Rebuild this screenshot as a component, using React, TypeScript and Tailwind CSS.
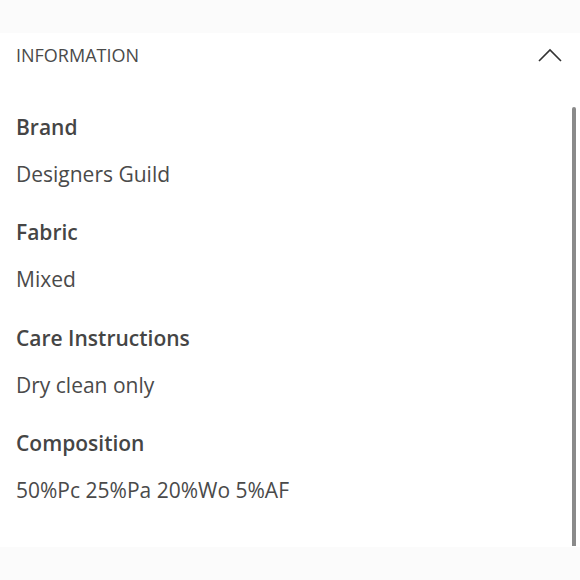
import React from 'react';

const rows = [
  { label: 'Brand', value: 'Designers Guild' },
  { label: 'Fabric', value: 'Mixed' },
  { label: 'Care Instructions', value: 'Dry clean only' },
  { label: 'Composition', value: '50%Pc 25%Pa 20%Wo 5%AF' },
];

const App: React.FC = () => {
  return (
    <div className="w-[580px] h-[580px] bg-white flex flex-col overflow-hidden" style={{ fontFamily: '"Open Sans", "Liberation Sans", sans-serif' }}>
      <div className="h-[33px] bg-[#fbfbfb]" />
      <div className="flex-1 relative">
        {/* Header */}
        <div className="flex items-center justify-between pl-4 pr-[18px] h-[44px]">
          <span className="text-[18px] text-[#4a4a4a]">INFORMATION</span>
          <svg width="24" height="14" viewBox="0 0 24 14" fill="none">
            <path d="M1 13 L12 2 L23 13" stroke="#333" strokeWidth="1.6" />
          </svg>
        </div>

        {/* Details */}
        <div className="flex flex-col pl-4 pt-[36px]">
          {rows.map((r) => (
            <div key={r.label} className="flex flex-col h-[105.3px]">
              <div className="text-[21px] font-semibold text-[#454545] leading-[28px]">{r.label}</div>
              <div className="text-[21px] text-[#4a4a4a] leading-[28px] mt-[19px]">{r.value}</div>
            </div>
          ))}
        </div>

        {/* Scrollbar */}
        <div className="absolute right-[4px] top-[74px] bottom-[1px] w-[4px] bg-[#8a8a8a] rounded-t-full" />
      </div>
      <div className="h-[33px] bg-[#fbfbfb]" />
    </div>
  );
};

export default App;
